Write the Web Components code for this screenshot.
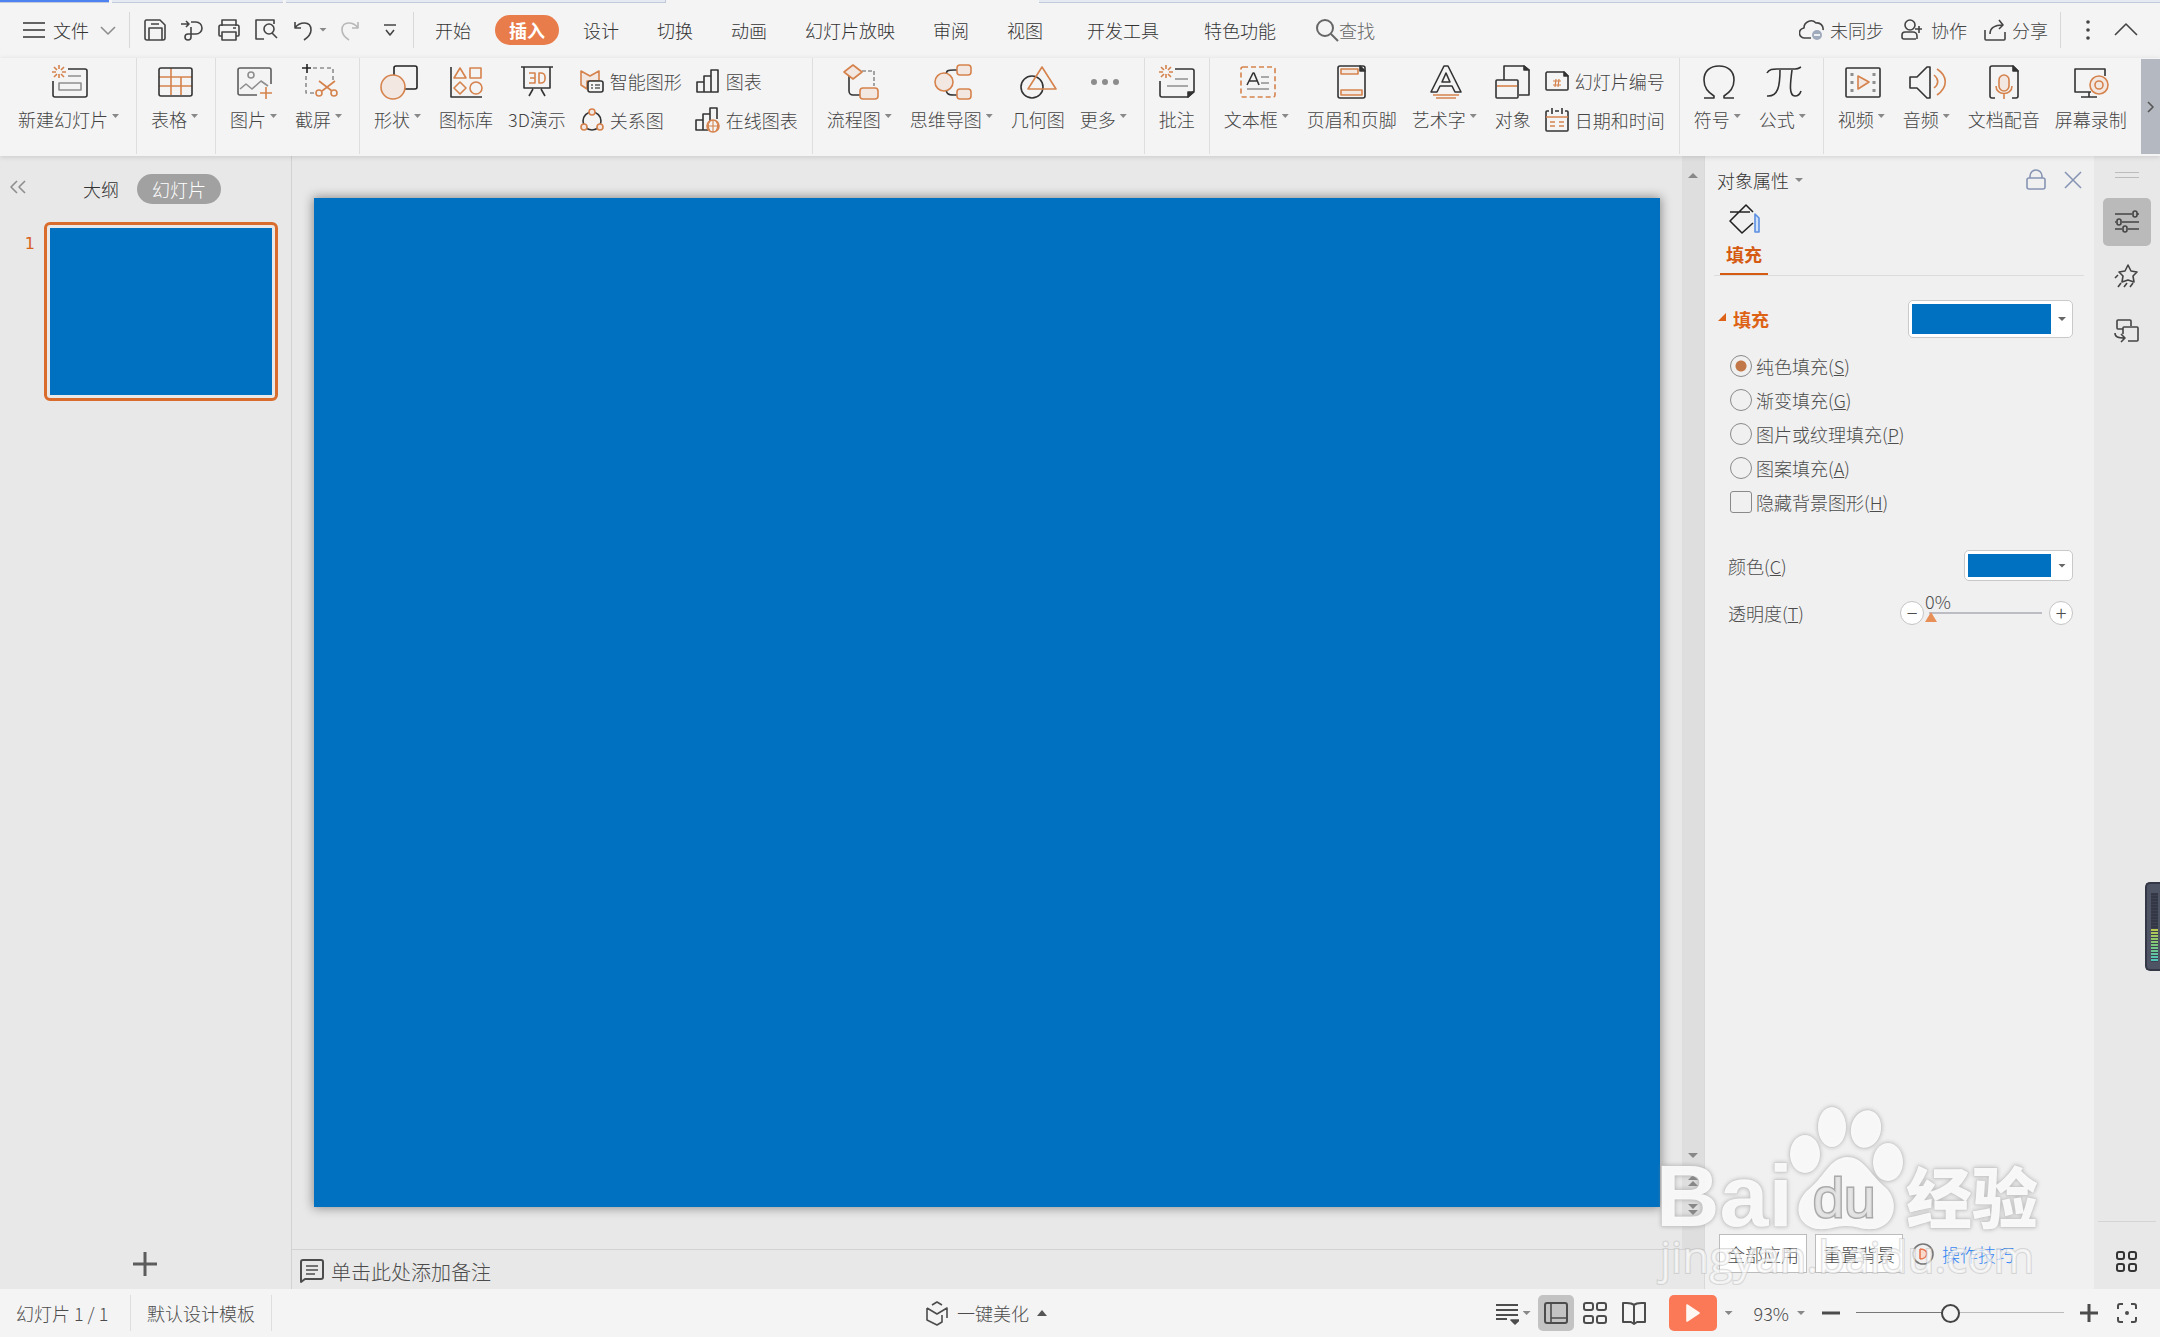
<!DOCTYPE html>
<html lang="zh-CN">
<head>
<meta charset="utf-8">
<title>演示文稿</title>
<style>
html,body{margin:0;height:100%}
body{font-family:"Noto Sans CJK SC","Open Sans",sans-serif;font-size:18px;line-height:24px;font-weight:300;color:#4c4c4c;background:#e8e8e8;overflow:hidden}
</style>
</head>
<body>
<slide-app></slide-app>
<script>
const ICONS={
 menu:[24,24,'<path d="M1 5H23M1 12H23M1 19H23"/>'],
 chev:[16,16,'<path class="g" d="M1 5L8 12L15 5"/>'],
 save:[24,24,'<path d="M3 2H17L22 7V20a2 2 0 0 1-2 2H4a2 2 0 0 1-2-2V3zM6 22V10H19V22M8 6H16"/>'],
 pdf:[24,24,'<path d="M1 6H9M6 3L9 6L6 9M11 4H16a5 5 0 0 1 0 12H8a3 3 0 1 0 3 3V9"/>'],
 print:[24,24,'<path d="M5 8V2H19V8M5 18H3a1 1 0 0 1-1-1V9a2 2 0 0 1 2-2H20a2 2 0 0 1 2 2V17a1 1 0 0 1-1 1H19M5 14H19V22H5zM16 10H19"/>'],
 preview:[24,24,'<path d="M10 21H2V2H20V6"/><circle cx="15" cy="11" r="5"/><path d="M18 15L23 20"/>'],
 undo:[20,24,'<path d="M2 4V10H8M2 10C6 4 18 2 18 12C18 17 14 20 11 22"/>'],
 redo:[20,24,'<path d="M18 4V10H12M18 10C14 4 2 2 2 12C2 17 6 20 9 22"/>'],
 custom:[14,14,'<path d="M1 2H13M3 7L7 12L11 7"/>'],
 search:[24,24,'<circle cx="10" cy="10" r="8" stroke-width="2"/><path stroke-width="2" d="M16 16L23 23"/>'],
 cloud:[26,24,'<path d="M12 20H6A5 5 0 0 1 5 10A7 7 0 0 1 17 5A6 6 0 0 1 24 12"/><circle cx="18" cy="17" r="5" fill="#a0aabd" stroke="none"/><path d="M15 17H21" stroke="#fff"/>'],
 person:[24,24,'<circle cx="10" cy="7" r="5"/><path d="M16 21H4a2 2 0 0 1-2-2V17a3 3 0 0 1 3-3H13a4 4 0 0 1 4 4V21M15 11H22M19 8V15"/>'],
 share:[24,24,'<path d="M2 12V21a1 1 0 0 0 1 1H21a1 1 0 0 0 1-1V14M7 16C7 9 12 7 20 7M16 2L20 7L16 11"/>'],
 dots:[6,24,'<g fill="currentColor" stroke="none"><circle cx="3" cy="4" r="1.8"/><circle cx="3" cy="12" r="1.8"/><circle cx="3" cy="20" r="1.8"/></g>'],
 up:[24,14,'<path d="M1 12L12 1L23 12"/>'],
 newslide:[36,36,'<g class="o"><path d="M7 1V5M7 10V14M0 8H4M10 8H14M2 3L5 6M9 10L12 13M12 3L9 6M5 10L2 13"/></g><path d="M16 5H33a2 2 0 0 1 2 2V31a2 2 0 0 1-2 2H3a2 2 0 0 1-2-2V17"/><path class="g" d="M16 12H29M7 19H29V26H7z"/>'],
 table:[36,36,'<path class="o" d="M13 4V31M1 13H34M1 22H34M23 13V31"/><rect x="1" y="4" width="33" height="28" rx="2"/>'],
 image:[36,36,'<path class="d" d="M34 20V6a2 2 0 0 0-2-2H3a2 2 0 0 0-2 2V29a2 2 0 0 0 2 2H20"/><circle class="g" cx="14" cy="11" r="3"/><path class="g" d="M3 25L9 20L15 25L24 17L31 22"/><path class="o" d="M29 23V35M23 29H35"/>'],
 snip:[38,36,'<path stroke="#222" d="M6 0V9M1 4H10"/><path class="g" stroke-dasharray="4 3" d="M12 4H32V16M5 12V29H14"/><path class="o" d="M18 17L31 27M34 17L21 27"/><circle class="o" cx="18" cy="29" r="3"/><circle class="o" cx="33" cy="29" r="3"/>'],
 shape:[38,36,'<rect x="14" y="2" width="23" height="23" rx="2" stroke="#222"/><circle class="f" cx="13" cy="23" r="12"/>'],
 iconlib:[34,36,'<path d="M2 3V33H33"/><g class="o"><path d="M11 4L17 14H5zM11 18L17 24L11 30L5 24z"/><rect x="21" y="4" width="11" height="10"/><circle cx="27" cy="24" r="6"/></g>'],
 show3d:[34,36,'<path d="M1 3H33M4 3V24H30V3M13 25L9 32M21 25L25 32"/><path class="o" d="M9 9H15V19H9M10 14H15M19 9H21a4 4 0 0 1 4 4V15a4 4 0 0 1-4 4H19z"/>'],
 smart:[24,24,'<path class="f" d="M1 2L10 7L19 2V12H7V20L1 16z"/><rect x="8" y="12" width="15" height="11" rx="2" fill="#f4f4f4"/><path class="d" d="M11 16H13M15 16H20M11 19H13M15 19H20"/>'],
 relation:[24,24,'<circle cx="12" cy="13" r="9"/><g class="f"><circle cx="12" cy="4" r="3"/><circle cx="4" cy="19" r="3"/><circle cx="20" cy="19" r="3"/></g>'],
 chart:[24,24,'<path d="M1 23V13H8V23zM8 23V7H15V23M15 23V1H22V23H8"/>'],
 netchart:[26,26,'<path d="M13 23H1V13H8V23M8 13V7H15V14M15 10V1H22V12"/><g class="o"><circle cx="18" cy="19" r="6" fill="#f4f4f4"/><path stroke-width="1.1" d="M12 19H24M18 13V25M15 14C13 17 13 21 15 24M21 14C23 17 23 21 21 24"/></g>'],
 flow:[36,36,'<path d="M6 12V27a4 4 0 0 0 4 4H18"/><path class="g" stroke-dasharray="4 2" d="M19 7H31V22"/><path class="f" d="M10 1L19 8L10 15L1 8z"/><rect class="f" x="17" y="24" width="18" height="11" rx="3"/>'],
 mind:[38,36,'<path d="M12 12C12 6 14 6 20 6H24M12 23C12 30 14 31 20 31H24"/><circle class="f" cx="10" cy="18" r="9"/><rect class="f" x="23" y="1" width="14" height="10" rx="3"/><rect class="f" x="23" y="25" width="14" height="10" rx="3"/>'],
 geo:[38,36,'<circle cx="13" cy="23" r="11"/><path class="o" d="M23 3L37 25H9z"/>'],
 more:[30,36,'<g fill="#8c8c8c" stroke="none"><circle cx="4" cy="18" r="3"/><circle cx="15" cy="18" r="3"/><circle cx="26" cy="18" r="3"/></g>'],
 note:[36,36,'<g class="o"><path d="M7 1V5M7 10V14M0 8H4M10 8H14M2 3L5 6M9 10L12 13M12 3L9 6M5 10L2 13"/></g><path d="M16 5H33a2 2 0 0 1 2 2V27L29 33H3a2 2 0 0 1-2-2V17"/><path fill="#333" d="M29 33V28H35z"/><path class="g" d="M16 15H29M8 22H29"/>'],
 textbox:[36,36,'<rect class="o" stroke-dasharray="5 3" x="1" y="3" width="34" height="30" rx="2"/><path d="M7 21L13 9H14L19 21M9 17H17"/><path class="g" d="M21 13H29M21 19H29M7 25H29"/>'],
 header:[30,36,'<rect x="1" y="2" width="27" height="32" rx="2"/><path fill="#333" d="M23 2L28 7H23z"/><rect class="f" x="4" y="5" width="17" height="5"/><rect class="f" x="4" y="26" width="21" height="5"/>'],
 wordart:[32,36,'<path d="M14 2H18L31 28H25L22 22H10L7 28H1zM16 9L12 18H20z"/><path class="o" d="M3 31H29M6 34H26"/>'],
 object:[36,36,'<path d="M9 16V2H29L34 6V31H24"/><path fill="#333" d="M29 2V6H34z"/><rect x="1" y="16" width="22" height="18" rx="1"/><path class="o" d="M2 22H22"/>'],
 number:[26,24,'<path d="M3 3H20L24 7V20a1 1 0 0 1-1 1H3a1 1 0 0 1-1-1V4z"/><path fill="#333" d="M20 3V7H24z"/><path class="o" stroke-width="1.2" d="M12 10L11 18M15 10L14 18M9 12H17M9 16H17"/>'],
 date:[26,26,'<path d="M5 4H3a1 1 0 0 0-1 1V23a1 1 0 0 0 1 1H23a1 1 0 0 0 1-1V5a1 1 0 0 0-1-1H21M8 1V7M18 1V7M11 4H15"/><path class="o" d="M2 10H24M6 15H11M15 15H20M6 19H11M15 19H20"/>'],
 omega:[32,36,'<path d="M1 34H11V32C5 28 1 24 1 16C1 7 7 2 16 2S31 7 31 16C31 24 27 28 21 32V34H31"/>'],
 pi:[38,36,'<path d="M2 9C4 5 8 5 12 5H30C34 5 34 4 36 3M15 6C15 22 13 33 2 32M27 6C25 21 24 32 30 32C33 32 35 30 36 27"/>'],
 video:[36,36,'<rect x="1" y="4" width="34" height="29" rx="1"/><path class="f" d="M13 12L24 18L13 25z"/><path class="g" stroke-width="3" stroke-dasharray="3 5" d="M7 9V28M29 9V28"/>'],
 audio:[38,36,'<path d="M1 13H8L18 3H21V34H18L8 24H1z"/><path class="o" d="M25 11C30 15 30 20 25 24M28 5C39 12 39 23 28 31"/>'],
 mic:[30,36,'<path d="M6 34H3a2 2 0 0 1-2-2V4a2 2 0 0 1 2-2H24L29 7V32a2 2 0 0 1-2 2H23"/><path fill="#333" d="M24 2L29 7H24z"/><rect class="f" x="10" y="11" width="10" height="16" rx="5"/><path class="o" d="M7 22C7 32 23 32 23 22M15 30V35"/>'],
 record:[36,36,'<path d="M32 12V5H2V28H18M8 33H24M16 28V33"/><circle class="f" cx="26" cy="21" r="9"/><circle class="o" cx="26" cy="21" r="4"/>'],
 collapse:[18,16,'<path class="g" d="M8 2L2 8L8 14M16 2L10 8L16 14"/>'],
 plus:[26,26,'<path stroke-width="3" d="M1 13H25M13 1V25"/>'],
 notes:[26,26,'<path stroke-width="2" d="M4 2H22a2 2 0 0 1 2 2V19a2 2 0 0 1-2 2H6L2 24V4a2 2 0 0 1 2-2z"/><path d="M7 8H19M7 12H19M7 16H16"/>'],
 lock:[20,22,'<rect x="1" y="9" width="18" height="11" rx="2"/><path d="M4 9V7a6 6 0 0 1 12 0V9"/>'],
 close:[18,18,'<path d="M1 1L17 17M17 1L1 17"/>'],
 bucket:[32,32,'<path stroke="#222" d="M2 9H22M25 9L18 2L2 18L14 30L25 20"/><path stroke="#5b8fe0" fill="#cfe0fa" d="M27 11L31 15V29H27z"/>'],
 sliders:[26,26,'<path d="M1 5H18M23 5H25M1 13H2M8 13H25M1 20H8M14 20H25"/><rect x="19" y="2" width="4" height="6" rx="2"/><rect x="3" y="10" width="4" height="6" rx="2"/><rect x="9" y="17" width="4" height="6" rx="2"/>'],
 star:[26,26,'<path d="M14 2L17 8L23 9L19 13L20 19L14 17L8 19L9 13L5 9L11 8zM4 12L1 15M7 20L4 24M13 20L10 24M19 20L16 24"/>'],
 swap:[26,26,'<path d="M9 12H4a1 1 0 0 1-1-1V4a1 1 0 0 1 1-1H16a1 1 0 0 1 1 1V9M9 17V11a1 1 0 0 1 1-1H23a1 1 0 0 1 1 1V23a1 1 0 0 1-1 1H14M1 16C1 20 4 21 11 21M7 17L11 21L7 25"/>'],
 grid:[24,24,'<g stroke-width="2"><rect x="2" y="2" width="7" height="7" rx="2"/><rect x="14" y="2" width="7" height="7" rx="2"/><rect x="2" y="14" width="7" height="7" rx="2"/><rect x="14" y="14" width="7" height="7" rx="2"/></g>'],
 tips:[22,22,'<circle cx="11" cy="11" r="10" stroke="#777"/><path stroke="#e8764e" fill="#f9d9cc" d="M8 6V16M8 6C18 6 16 16 8 16"/>'],
 cube:[24,26,'<path d="M7 5L12 2L17 5M2 8V20L12 25L17 22V15M2 8L12 14L22 8V18"/>'],
 lines:[24,24,'<path stroke-width="2" d="M1 4H23M1 9H23M1 14H23M1 18H12"/><path fill="currentColor" d="M16 19H24L20 23z"/>'],
 normal:[26,24,'<rect x="2" y="2" width="22" height="20" rx="2" stroke-width="2"/><path d="M8 2V22M8 17H24"/>'],
 sorter:[26,24,'<g stroke-width="2"><rect x="2" y="2" width="9" height="7" rx="2"/><rect x="15" y="2" width="9" height="7" rx="2"/><rect x="2" y="15" width="9" height="7" rx="2"/><rect x="15" y="15" width="9" height="7" rx="2"/></g>'],
 book:[24,24,'<path stroke-width="2" d="M12 4C9 1 5 2 1 2V21H9L12 23L15 21H23V2C19 2 15 1 12 4V22"/>'],
 play:[16,20,'<path fill="#fff8f2" stroke="#fff8f2" d="M2 2L14 10L2 18z"/>'],
 minus:[20,20,'<path stroke-width="3" d="M1 10H19"/>'],
 zoomin:[20,20,'<path stroke-width="3" d="M1 10H19M10 1V19"/>'],
 fit:[20,20,'<path stroke-width="2" d="M1 6V3a2 2 0 0 1 2-2H6M14 1H17a2 2 0 0 1 2 2V6M19 14V17a2 2 0 0 1-2 2H14M6 19H3a2 2 0 0 1-2-2V14"/><circle cx="10" cy="10" r="2" fill="currentColor" stroke="none"/>'],
 next:[8,12,'<path d="M2 1L7 6L2 11"/>']
};
const BASE=`*{box-sizing:border-box}button,input,label,a{font:inherit;color:inherit}button{background:none;border:0;padding:0;margin:0;display:inline-flex;align-items:center;justify-content:center;white-space:nowrap;cursor:pointer}input{margin:0}
.arr{display:inline-block;width:8px;height:4px;background:#888;clip-path:polygon(0 0,100% 0,50% 100%);flex:none}`;
function define(tag,render){
 customElements.define(tag,class extends HTMLElement{
  connectedCallback(){
   if(this.shadowRoot)return;
   const [css,html]=render(this);
   this.attachShadow({mode:'open'}).innerHTML=`<style>${BASE}${css}</style>${html}`;
  }
 });
}
define('ui-icon',el=>{
 const [w,h,body]=ICONS[el.getAttribute('name')];
 return [`:host{display:inline-flex;flex:none}svg{display:block;fill:none;stroke:currentColor;stroke-width:1.6;stroke-linejoin:round}
 .o{stroke:#d5824c}.g{stroke:#8e8e8e}.d{stroke:#5c5c5c}.f{stroke:#d5824c;fill:#f3e7e2}`,
 `<svg width="${w}" height="${h}" viewBox="0 0 ${w} ${h}" aria-hidden="true">${body}</svg>`];
});
define('ribbon-button',el=>{
 const row=el.hasAttribute('row'),drop=el.hasAttribute('drop');
 return [row?`:host{display:flex}button{height:24px;gap:5px;justify-content:flex-start}.ic{width:26px;display:flex;justify-content:center;color:#333}`
 :`:host{display:block;padding:6px 7px 0 8px}button{flex-direction:column;height:68px;justify-content:flex-start}.ic{height:36px;display:flex;color:#333}.tx{display:flex;gap:4px;align-items:center;margin-top:6px;height:26px}.arr{width:7px;margin-right:3px;margin-bottom:6px}`,
 `<button type="button"><span class="ic"><ui-icon name="${el.getAttribute('icon')}"></ui-icon></span><span class="tx"><slot></slot>${drop?'<i class="arr"></i>':''}</span></button>`];
});
define('ribbon-group',el=>[`:host{display:flex;padding:0 7px 0 6px;border-right:1px solid #dedede;height:96px}:host([last]){border:0}`,'<slot></slot>']);
define('ribbon-stack',el=>[`:host{display:flex;flex-direction:column;gap:15px;padding:11px 7px 0 6px}`,'<slot></slot>']);
define('menu-tab',el=>[`:host{display:block;padding:0 7px}button{height:30px;padding:0 12px;border-radius:15px;color:#333}:host([active]) button{background:#e87c4b;color:#fff;font-weight:700;padding:0 14px;margin:0 -2px}`,'<button type="button"><slot></slot></button>']);
define('tool-button',el=>[`:host{display:inline-flex}button{gap:${el.getAttribute('gap')||0}px;height:30px}`,
 `<button type="button" aria-label="${el.getAttribute('label')||''}"><ui-icon name="${el.getAttribute('icon')}"></ui-icon><slot></slot></button>`]);

define('doc-strip',()=>[`:host{display:flex;height:3px;gap:3px;background:#f4f4f4}i{height:3px;background:#e6eaf2;border-bottom:1px solid #c2c9d8}
 .a{width:109px;background:#4d82f0}.b{width:171px}.c{width:380px;border-right:1px solid #c2c9d8}.d{width:367px;background:#f4f4f4;border:0}.e{flex:1}`,
 '<i class="a"></i><i class="b"></i><i class="c"></i><i class="d"></i><i class="e"></i>']);

define('menu-bar',()=>[`:host{display:flex;align-items:center;height:55px;padding:0 22px 2px;color:#444;box-sizing:border-box}
 .file{gap:7px;color:#333}.sep{width:1px;height:36px;background:#d8d8d8}nav{display:flex;align-items:center;margin-left:2px}.quick{display:flex;align-items:center;margin:0 16px 0 13px;gap:13px}
 .quick .un{display:flex;align-items:center;gap:6px;margin-left:2px}.quick .re{color:#b8b8b8}.quick .cu{margin:0 0 0 10px}
 .dev{margin-left:6px}.fea{margin-left:7px}.right{display:flex;align-items:center;margin-left:auto;gap:16px;color:#444}.find{margin-left:20px;color:#666}.right .sep{margin:0 8px 0 -4px}.collapse{margin-left:7px}`,
 `<button class="file" type="button"><ui-icon name="menu"></ui-icon>文件<ui-icon name="chev" style="margin-left:4px"></ui-icon></button><span class="sep" style="margin-left:13px"></span>
 <div class="quick"><tool-button icon="save" label="保存"></tool-button><tool-button icon="pdf" label="输出"></tool-button><tool-button icon="print" label="打印"></tool-button><tool-button icon="preview" label="预览"></tool-button>
 <span class="un"><tool-button icon="undo" label="撤销"></tool-button><i class="arr"></i></span><tool-button class="re" icon="redo" label="恢复"></tool-button><tool-button class="cu" icon="custom" label="自定义"></tool-button></div><span class="sep"></span>
 <nav><menu-tab>开始</menu-tab><menu-tab active>插入</menu-tab><menu-tab>设计</menu-tab><menu-tab>切换</menu-tab><menu-tab>动画</menu-tab><menu-tab>幻灯片放映</menu-tab><menu-tab>审阅</menu-tab><menu-tab>视图</menu-tab><menu-tab class="dev">开发工具</menu-tab><menu-tab class="fea">特色功能</menu-tab></nav>
 <tool-button class="find" icon="search">查找</tool-button>
 <div class="right"><tool-button icon="cloud" gap="5">未同步</tool-button><tool-button icon="person" gap="7">协作</tool-button><tool-button icon="share" gap="5">分享</tool-button><span class="sep"></span><tool-button icon="dots" label="更多"></tool-button><tool-button class="collapse" icon="up" label="收起"></tool-button></div>`]);

define('insert-ribbon',()=>[`:host{display:flex;height:98px;padding-left:4px;box-shadow:0 1px 5px #0002;position:relative;z-index:1;background:#f4f4f4;color:#444}.next{margin-left:auto;width:20px;height:95px;background:#b4b8c1;margin-top:1px;color:#555}`,
 `<ribbon-group><ribbon-button icon="newslide" drop>新建幻灯片</ribbon-button></ribbon-group>
 <ribbon-group><ribbon-button icon="table" drop>表格</ribbon-button></ribbon-group>
 <ribbon-group><ribbon-button icon="image" drop>图片</ribbon-button><ribbon-button icon="snip" drop>截屏</ribbon-button></ribbon-group>
 <ribbon-group><ribbon-button icon="shape" drop>形状</ribbon-button><ribbon-button icon="iconlib">图标库</ribbon-button><ribbon-button icon="show3d">3D演示</ribbon-button>
 <ribbon-stack><ribbon-button row icon="smart">智能图形</ribbon-button><ribbon-button row icon="relation">关系图</ribbon-button></ribbon-stack>
 <ribbon-stack style="padding-left:6px"><ribbon-button row icon="chart">图表</ribbon-button><ribbon-button row icon="netchart">在线图表</ribbon-button></ribbon-stack></ribbon-group>
 <ribbon-group><ribbon-button icon="flow" drop>流程图</ribbon-button><ribbon-button icon="mind" drop>思维导图</ribbon-button><ribbon-button icon="geo">几何图</ribbon-button><ribbon-button icon="more" drop>更多</ribbon-button></ribbon-group>
 <ribbon-group><ribbon-button icon="note">批注</ribbon-button></ribbon-group>
 <ribbon-group><ribbon-button icon="textbox" drop>文本框</ribbon-button><ribbon-button icon="header">页眉和页脚</ribbon-button><ribbon-button icon="wordart" drop>艺术字</ribbon-button><ribbon-button icon="object">对象</ribbon-button>
 <ribbon-stack><ribbon-button row icon="number">幻灯片编号</ribbon-button><ribbon-button row icon="date">日期和时间</ribbon-button></ribbon-stack></ribbon-group>
 <ribbon-group><ribbon-button icon="omega" drop>符号</ribbon-button><ribbon-button icon="pi" drop>公式</ribbon-button></ribbon-group>
 <ribbon-group last><ribbon-button icon="video" drop>视频</ribbon-button><ribbon-button icon="audio" drop>音频</ribbon-button><ribbon-button icon="mic">文档配音</ribbon-button><ribbon-button icon="record">屏幕录制</ribbon-button></ribbon-group>
 <button class="next" type="button" aria-label="向右滚动"><ui-icon name="next"></ui-icon></button>`]);

define('outline-pane',()=>[`:host{display:flex;flex-direction:column;border-right:1px solid #d2d2d2;padding:18px 13px 12px 9px}
 .tabs{display:flex;align-items:center;height:30px;color:#333}.tabs .o{margin-left:56px;margin-right:18px}.tabs .s{background:#a1a1a1;color:#fff;border-radius:15px;height:30px;padding:0 15px}
 .tabs .c{margin-bottom:4px}.row{display:flex;margin-top:18px;gap:9px}.n{width:26px;text-align:right;color:#d9621e;font-family:"DejaVu Sans",sans-serif;font-weight:400;font-size:16px;padding-top:10px}
 .thumb{flex:1;height:179px;border:3px solid #d96c2c;border-radius:6px;padding:3px}.thumb i{display:block;height:100%;background:#0070c0}
 .add{margin:auto auto 0;padding-left:2px;color:#5c5c5c}`,
 `<div class="tabs"><button class="c" type="button" aria-label="收起"><ui-icon name="collapse"></ui-icon></button><button class="o" type="button">大纲</button><button class="s" type="button">幻灯片</button></div>
 <div class="row"><span class="n">1</span><div class="thumb"><i></i></div></div><button class="add" type="button" aria-label="新建"><ui-icon name="plus"></ui-icon></button>`]);

define('slide-stage',()=>[`:host{display:grid;grid-template:1fr 40px/1fr 22px}.canvas{padding:42px 22px;display:flex}.slide{flex:1;background:#0070c0;box-shadow:0 0 10px 1px #0006}
 .bar{background:#dedede;display:flex;flex-direction:column;align-items:center;padding:17px 0 34px}.bar i{width:10px;height:5px;background:#888;clip-path:polygon(0 0,100% 0,50% 100%)}.bar .u{clip-path:polygon(50% 0,100% 100%,0 100%)}
 .bar .d{margin-top:auto;margin-bottom:17px}.bar .p{margin-bottom:1px}.bar .q{margin-top:18px;margin-bottom:1px}
 .notes{grid-column:1/3;border-top:1px solid #d2d2d2;display:flex;align-items:center;padding:3px 8px 0 7px;gap:6px;font-size:20px;color:#4c4c4c}input{flex:1;border:0;background:none;padding:0;outline:0;height:30px}`,
 `<div class="canvas"><div class="slide"></div></div><div class="bar"><i class="u"></i><i class="d"></i><i class="u p"></i><i class="u"></i><i class="q"></i><i></i></div>
 <div class="notes"><ui-icon name="notes"></ui-icon><input type="text" aria-label="备注" value="单击此处添加备注"></div>`]);

define('color-combo',el=>[`:host{display:block}button{width:${el.getAttribute('w')}px;height:${el.getAttribute('h')}px;background:#fff;border:1px solid #c9c9c9;border-radius:5px;padding:3px 6px 3px 3px;gap:7px}.sw{flex:1;align-self:stretch;background:#0070c0}.arr{background:#666}`,
 `<button type="button" aria-haspopup="listbox" aria-label="${el.getAttribute('label')}"><span class="sw"></span><i class="arr"></i></button>`]);
define('fill-option',el=>{const box=el.hasAttribute('box');
 return [`:host{display:block}label{display:flex;align-items:center;gap:4px;height:34px}input{appearance:none;width:22px;height:22px;border:1px solid #8a8a8a;border-radius:${box?3:11}px}input:checked{background:radial-gradient(circle,#c27748 0 5px,transparent 6px)}`,
 `<label><input type="${box?'checkbox':'radio'}" name="fill" ${el.hasAttribute('on')?'checked':''}><span><slot></slot></span></label>`];});

define('property-pane',()=>[`:host{display:flex;flex-direction:column;background:#f0f0f0;border-left:1px solid #d9d9d9;padding:12px 0 16px 0;color:#4c4c4c}
 .head{display:flex;align-items:center;padding:0 12px 0 12px;height:24px;color:#333}.head .t{gap:6px}.head .l{margin-left:auto;display:flex;gap:18px;color:#8795b4}
 .tab{display:flex;flex-direction:column;align-items:flex-start;border-bottom:1px solid #dcdcdc;margin:11px 10px 0 9px;padding-left:6px;height:73px}.tab button{flex-direction:column;font-weight:700;color:#d55a12;gap:7px;width:48px;height:74px;justify-content:flex-start;border-bottom:2px solid #d55a12}
 .line{display:flex;align-items:center;justify-content:space-between;padding:0 21px 0 23px}.ft{font-weight:700;color:#dd6215;gap:7px;margin-left:-10px}.ft i{width:8px;height:8px;background:#dd6215;clip-path:polygon(100% 0,100% 100%,0 100%);margin-bottom:4px}
 .opts{padding:11px 24px 0 25px}.sl{display:flex;align-items:center;gap:1px}.rd{width:24px;height:24px;border:1px solid #c4c4c4;border-radius:12px;background:#fff;font-size:20px;line-height:20px}.rng{width:118px;display:flex;flex-direction:column;height:48px;margin-right:5px}.rng span{line-height:24px;height:22px}
 input{appearance:none;width:118px;height:12px;background:linear-gradient(#bcbdc4,#bcbdc4) 4px 1px/113px 2px no-repeat}input::-webkit-slider-thumb{appearance:none;width:12px;height:10px;background:#e78f57;clip-path:polygon(50% 0,100% 100%,0 100%)}
 .foot{display:flex;align-items:center;margin-top:auto;padding:0 15px 0 14px}.foot .b{background:#fff;border:1px solid #bcbcbc;width:88px;height:39px;margin-right:8px}.foot a{display:flex;gap:8px;align-items:center;color:#3487f5;text-decoration:none;margin-left:1px}`,
 `<div class="head"><button class="t" type="button">对象属性<i class="arr"></i></button><span class="l"><tool-button icon="lock" label="锁定"></tool-button><tool-button icon="close" label="关闭"></tool-button></span></div>
 <div class="tab"><button type="button"><ui-icon name="bucket"></ui-icon>填充</button></div>
 <div class="line" style="margin-top:24px"><button class="ft" type="button"><i></i>填充</button><color-combo w="165" h="38" label="填充"></color-combo></div>
 <div class="opts"><fill-option on>纯色填充(<u>S</u>)</fill-option><fill-option>渐变填充(<u>G</u>)</fill-option><fill-option>图片或纹理填充(<u>P</u>)</fill-option><fill-option>图案填充(<u>A</u>)</fill-option><fill-option box>隐藏背景图形(<u>H</u>)</fill-option></div>
 <div class="line" style="margin-top:31px"><span>颜色(<u>C</u>)</span><color-combo w="109" h="31" label="颜色"></color-combo></div>
 <div class="line" style="margin-top:8px"><label for="op">透明度(<u>T</u>)</label><span class="sl"><button class="rd" type="button">−</button><span class="rng"><span>0%</span><input id="op" type="range" min="0" max="100" value="0"></span><button class="rd" type="button">+</button></span></div>
 <div class="foot"><button class="b" type="button">全部应用</button><button class="b" type="button">重置背景</button><a href="#tips"><ui-icon name="tips"></ui-icon>操作技巧</a></div>`]);

define('side-strip',()=>[`:host{display:flex;flex-direction:column;align-items:center;padding:16px 0 15px;color:#444}.grip{width:24px;height:6px;border:solid #bbb;border-width:1px 0;margin-bottom:20px}
 button{width:48px;height:48px;border-radius:5px;margin-bottom:6px}.on{background:#bababa}.bot{margin-top:auto;border-top:1px solid #d4d4d4;width:58px;padding-top:28px;display:flex;justify-content:center;color:#333}.bot button{height:24px;margin:0}`,
 `<span class="grip"></span><button class="on" type="button" aria-label="属性"><ui-icon name="sliders"></ui-icon></button><button type="button" aria-label="动画"><ui-icon name="star"></ui-icon></button><button type="button" aria-label="切换"><ui-icon name="swap"></ui-icon></button>
 <div class="bot"><button type="button" aria-label="更多"><ui-icon name="grid"></ui-icon></button></div>`]);

define('status-bar',()=>[`:host{display:flex;align-items:center;height:48px;background:#f4f4f4;padding:0 23px 0 16px;color:#4c4c4c}.sep{width:1px;height:36px;background:#dedede;margin:0 16px}.left,.right{display:flex;align-items:center;flex:1}.page{min-width:98px}.right{justify-content:flex-end}
 .mid{gap:8px;margin-right:181px}.mid .arr{clip-path:polygon(50% 0,100% 100%,0 100%);width:10px;height:6px;background:#555}.menu{gap:4px;margin-right:7px}.v{width:36px;height:36px;border-radius:5px;margin-right:3px}.v.on{background:#c3c3c3}.play{width:48px;height:36px;border-radius:5px;background:#fc7958;margin:0 8px 0 14px}
 .pc{gap:8px;margin:0 16px 0 21px}input{appearance:none;width:208px;height:20px;margin:0 15px;background:linear-gradient(90deg,#777 45%,#bbb 45%) 0 9px/100% 1px no-repeat}input::-webkit-slider-thumb{appearance:none;width:19px;height:19px;border:2px solid #444;border-radius:10px;background:#f4f4f4}`,
 `<div class="left"><span class="page">幻灯片 1 / 1</span><span class="sep"></span><span>默认设计模板</span><span class="sep"></span></div>
 <button class="mid" type="button"><ui-icon name="cube"></ui-icon>一键美化<i class="arr"></i></button>
 <div class="right"><button class="menu" type="button" aria-label="备注"><ui-icon name="lines"></ui-icon><i class="arr"></i></button><button class="v on" type="button" aria-label="普通视图"><ui-icon name="normal"></ui-icon></button><button class="v" type="button" aria-label="浏览"><ui-icon name="sorter"></ui-icon></button><button class="v" type="button" aria-label="阅读"><ui-icon name="book"></ui-icon></button>
 <button class="play" type="button" aria-label="播放"><ui-icon name="play"></ui-icon></button><i class="arr"></i><button class="pc" type="button">93%<i class="arr"></i></button><button type="button" aria-label="缩小"><ui-icon name="minus"></ui-icon></button><input type="range" min="0" max="100" value="45" aria-label="缩放"><button type="button" aria-label="放大"><ui-icon name="zoomin"></ui-icon></button><button type="button" aria-label="适应" style="margin-left:18px"><ui-icon name="fit"></ui-icon></button></div>`]);

define('level-meter',()=>[`:host{position:absolute;right:0;top:882px;width:15px;height:89px;border-radius:5px 0 0 5px;background:#4e5464;border:2px solid #343846;border-right:0;padding:9px 0 0 4px;box-sizing:border-box}
 i{display:block;width:7px;height:69px;background:repeating-linear-gradient(transparent 0 2px,#3c4150 2px 3px),linear-gradient(#343846 0 36px,#bcc84f 36px,#7cc87c 52px,#4cc4c0)}`,'<i></i>']);

define('site-watermark',()=>[`:host{position:absolute;right:112px;bottom:46px;width:392px;height:186px;pointer-events:none}svg{display:block;overflow:visible}.mark{filter:drop-shadow(0 0 2px #8889)}.mark text,.paw{fill:#fcfcfc;fill-opacity:.93;stroke:#ccc;stroke-width:1;paint-order:stroke}.mark .cut{fill:#e4e4e4;stroke:#aaa;stroke-width:3}.url{fill:#fff;fill-opacity:.65;stroke:#bbb;stroke-opacity:.5;stroke-width:2;paint-order:stroke}`,
 `<svg width="392" height="186" viewBox="0 0 392 186"><g class="mark"><g class="paw"><ellipse cx="149" cy="49" rx="15" ry="19"/><ellipse cx="176" cy="22" rx="14" ry="20"/><ellipse cx="210" cy="24" rx="15" ry="19" transform="rotate(12 210 24)"/><ellipse cx="232" cy="57" rx="15" ry="19"/><path d="M190 52C208 51 213 69 229 82C244 95 240 121 218 124C204 125 202 121 190 121S176 125 160 124C138 119 138 96 153 84C169 71 173 54 190 52z"/></g>
 <text x="0" y="121" font-family="Liberation Sans" font-weight="700" font-size="88">Bai</text><text class="cut" x="157" y="112" font-family="Liberation Sans" font-weight="400" font-size="56">du</text><text x="250" y="118" font-family="Noto Sans CJK SC" font-weight="900" font-size="66">经验</text></g><text class="url" x="4" y="168" font-family="Open Sans" font-weight="400" font-size="44">jingyan.baidu.com</text></svg>`]);

define('slide-app',()=>[`:host{display:flex;flex-direction:column;height:100vh;position:relative;overflow:hidden}header{background:#f4f4f4}main{flex:1;display:grid;grid-template-columns:292px 1fr 390px 66px;min-height:0}`,
 `<header><doc-strip></doc-strip><menu-bar></menu-bar><insert-ribbon></insert-ribbon></header><main><outline-pane></outline-pane><slide-stage></slide-stage><property-pane></property-pane><side-strip></side-strip></main><status-bar></status-bar><level-meter></level-meter><site-watermark></site-watermark>`]);
</script>
</body>
</html>
